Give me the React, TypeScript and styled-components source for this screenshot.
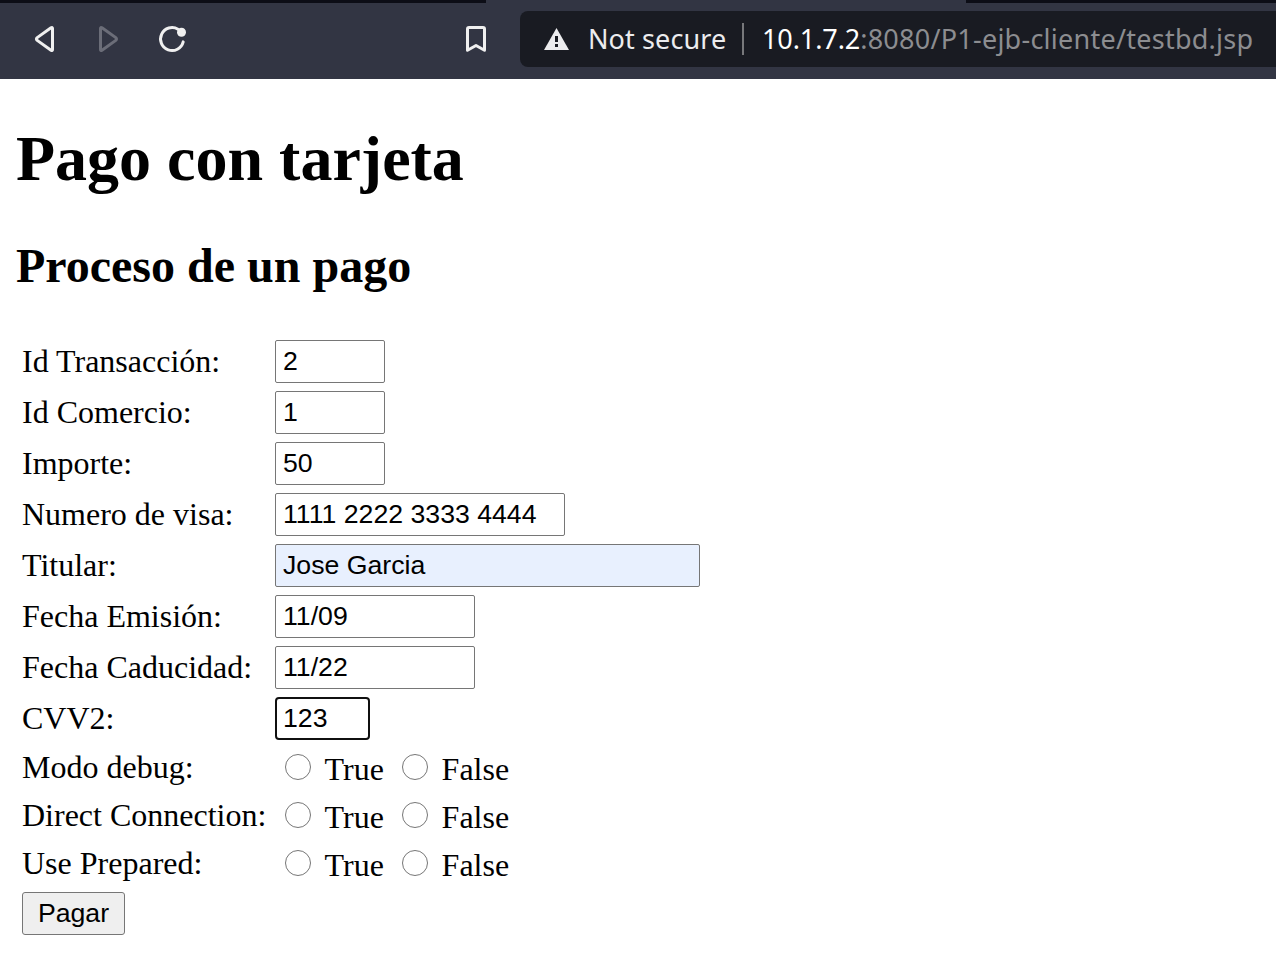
import React from "react";
import styled, { createGlobalStyle } from "styled-components";

const GlobalStyle = createGlobalStyle`
  * { box-sizing: border-box; }
  body {
    margin: 0;
    background: #fff;
    color: #000;
    font-family: "Liberation Serif", serif;
    overflow: hidden;
  }
`;

const TabStrip = styled.div`
  display: flex;
  justify-content: space-between;
  height: 3px;
  background: #323543;
`;

const InactiveTabs = styled.div<{ $width: number }>`
  width: ${(p) => p.$width}px;
  background: #0c0d16;
`;

const Toolbar = styled.header`
  display: flex;
  align-items: center;
  height: 76px;
  padding: 0 0 4px 24px;
  background: #323543;
`;

const IconButton = styled.button`
  display: flex;
  flex: none;
  width: 40px;
  height: 40px;
  margin-right: 24px;
  padding: 0;
  border: 0;
  background: none;
`;

const BookmarkButton = styled(IconButton)`
  margin: 0 24px 0 240px;
`;

const AddressBar = styled.div`
  display: flex;
  flex: 1;
  align-items: center;
  height: 56px;
  padding-left: 24px;
  border-radius: 8px 0 0 8px;
  background: #191b22;
  color: #fff;
  font: 27px/36px "Noto Sans", sans-serif;
  white-space: nowrap;
`;

const Security = styled.span`
  width: 154px;
  margin-left: 19px;
  color: #ececee;
  letter-spacing: 0.1px;
`;

const Divider = styled.span`
  width: 2px;
  height: 32px;
  margin-right: 18px;
  background: #77787b;
`;

const Url = styled.span`
  letter-spacing: -0.1px;
`;

const UrlPath = styled.span`
  color: #8c8d90;
  letter-spacing: 0.25px;
`;

const Page = styled.main`
  padding: 43px 16px 0;
`;

const Title = styled.h1`
  margin: 0 0 42px;
  font-size: 64px;
  line-height: 74px;
`;

const Subtitle = styled.h2`
  margin: 0 0 43px;
  font-size: 48px;
  line-height: 55px;
`;

const Form = styled.form`
  padding-left: 6px;
  font-size: 32px;
  line-height: 36px;
`;

const Row = styled.div<{ $height: number }>`
  display: flex;
  align-items: center;
  height: ${(p) => p.$height}px;
`;

const Label = styled.label`
  flex: none;
  width: 253px;
  padding-bottom: 2px;
  white-space: nowrap;
`;

const TextInput = styled.input<{ $width: number; $filled?: boolean; $active?: boolean }>`
  width: ${(p) => p.$width}px;
  height: 43px;
  padding: 0 ${(p) => (p.$active ? 6 : 7)}px 1px;
  border: ${(p) => (p.$active ? "2px solid #101010" : "1px solid #767676")};
  border-radius: ${(p) => (p.$active ? 4 : 2)}px;
  outline: none;
  background: ${(p) => (p.$filled ? "#e8f0fe" : "#fff")};
  color: #000;
  font: 26.667px "Liberation Sans", sans-serif;
`;

const Choice = styled.label<{ $width: number }>`
  display: flex;
  align-items: center;
  width: ${(p) => p.$width}px;
  padding-left: 10px;
`;

const Radio = styled.input`
  appearance: none;
  flex: none;
  width: 26px;
  height: 26px;
  margin: 0 13.6px 2px 0;
  border: 1px solid #767676;
  border-radius: 50%;
  background: #fff;
`;

const ChoiceText = styled.span`
  padding-top: 1px;
`;

const SubmitButton = styled.button`
  display: block;
  width: 103px;
  height: 43px;
  margin-top: 4px;
  padding: 0;
  border: 1px solid #767676;
  border-radius: 3px;
  background: #efefef;
  color: #000;
  font: 26.667px "Liberation Sans", sans-serif;
`;

const fields = [
  { label: "Id Transacción:", value: "2", width: 110 },
  { label: "Id Comercio:", value: "1", width: 110 },
  { label: "Importe:", value: "50", width: 110 },
  { label: "Numero de visa:", value: "1111 2222 3333 4444", width: 290 },
  { label: "Titular:", value: "Jose Garcia", width: 425, filled: true },
  { label: "Fecha Emisión:", value: "11/09", width: 200 },
  { label: "Fecha Caducidad:", value: "11/22", width: 200 },
  { label: "CVV2:", value: "123", width: 95, active: true },
];

const options = ["Modo debug:", "Direct Connection:", "Use Prepared:"];

const stroke = { fill: "none", strokeWidth: 3, strokeLinejoin: "round", strokeLinecap: "round" } as const;

export default function App() {
  return (
    <>
      <GlobalStyle />
      <TabStrip>
        <InactiveTabs $width={486} />
        <InactiveTabs $width={310} />
      </TabStrip>
      <Toolbar>
        <IconButton type="button" aria-label="Back">
          <svg width="40" height="40" {...stroke} stroke="#f0f0f0">
            <path d="M27 8.8Q28.5 7.9 28.5 9.6V30.4Q28.5 32.1 27 31.2L13.2 21.4Q11.8 20 13.2 18.6Z" />
          </svg>
        </IconButton>
        <IconButton type="button" aria-label="Forward" disabled>
          <svg width="40" height="40" {...stroke} stroke="#6b6d78">
            <path d="M14 8.8Q12.5 7.9 12.5 9.6V30.4Q12.5 32.1 14 31.2L27.8 21.4Q29.2 20 27.8 18.6Z" />
          </svg>
        </IconButton>
        <IconButton type="button" aria-label="Reload">
          <svg width="40" height="40" {...stroke} stroke="#f0f0f0">
            <path d="M26 10.2A11.5 11.5 0 1 0 31.2 22.9" />
            <circle cx="29.5" cy="13.3" r="4.5" fill="#f0f0f0" stroke="none" />
          </svg>
        </IconButton>
        <BookmarkButton type="button" aria-label="Bookmark">
          <svg width="40" height="40" {...stroke} stroke="#f0f0f0">
            <path d="M13 8.5H27Q28.5 8.5 28.5 10V31.3L20 26.5L11.5 31.3V10Q11.5 8.5 13 8.5Z" />
          </svg>
        </BookmarkButton>
        <AddressBar>
          <svg width="25" height="22" viewBox="0 0 25 22">
            <path d="M12.5 0L25 22H0Z" fill="#ececee" />
            <path d="M11 8h3v6h-3zM11 16h3v3h-3z" fill="#191b22" />
          </svg>
          <Security>Not secure</Security>
          <Divider />
          <Url>10.1.7.2</Url>
          <UrlPath>:8080/P1-ejb-cliente/testbd.jsp</UrlPath>
        </AddressBar>
      </Toolbar>
      <Page>
        <Title>Pago con tarjeta</Title>
        <Subtitle>Proceso de un pago</Subtitle>
        <Form>
          {fields.map((f) => (
            <Row key={f.label} $height={51}>
              <Label>{f.label}</Label>
              <TextInput $width={f.width} $filled={f.filled} $active={f.active} defaultValue={f.value} />
            </Row>
          ))}
          {options.map((o) => (
            <Row key={o} $height={48}>
              <Label>{o}</Label>
              <Choice $width={117}>
                <Radio type="radio" name={o} />
                <ChoiceText>True</ChoiceText>
              </Choice>
              <Choice $width={125}>
                <Radio type="radio" name={o} />
                <ChoiceText>False</ChoiceText>
              </Choice>
            </Row>
          ))}
          <SubmitButton type="button">Pagar</SubmitButton>
        </Form>
      </Page>
    </>
  );
}
